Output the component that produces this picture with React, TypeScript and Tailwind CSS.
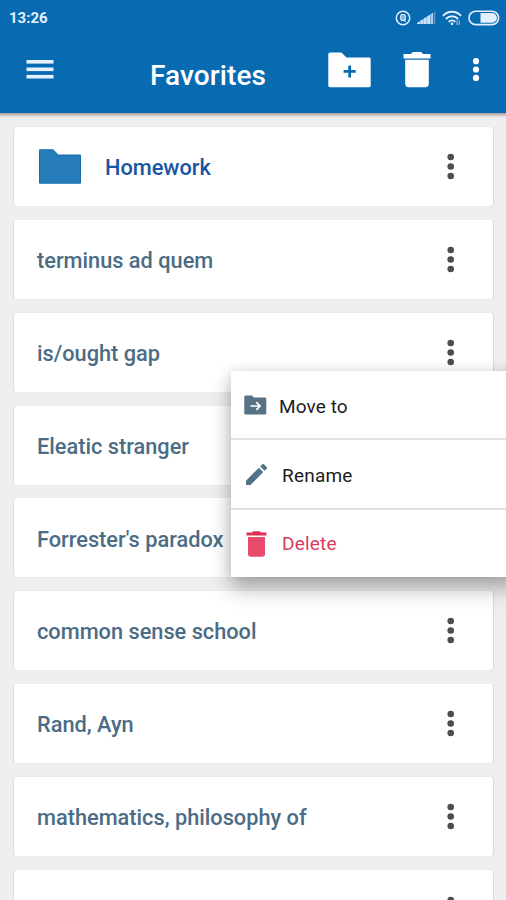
import { useState } from 'react'

interface Favorite {
  id: number
  title: string
  folder?: boolean
}

const favorites: Favorite[] = [
  { id: 1, title: 'Homework', folder: true },
  { id: 2, title: 'terminus ad quem' },
  { id: 3, title: 'is/ought gap' },
  { id: 4, title: 'Eleatic stranger' },
  { id: 5, title: "Forrester's paradox" },
  { id: 6, title: 'common sense school' },
  { id: 7, title: 'Rand, Ayn' },
  { id: 8, title: 'mathematics, philosophy of' },
  { id: 9, title: '' }
]

function MoreIcon({ className }: { className?: string }) {
  return (
    <svg width="8" height="27" viewBox="0 0 8 27" fill="currentColor" className={className}>
      <circle cx="3.7" cy="4" r="3.3" />
      <circle cx="3.7" cy="13.5" r="3.3" />
      <circle cx="3.7" cy="23" r="3.3" />
    </svg>
  )
}

function StatusBar() {
  return (
    <div className="flex h-[35px] items-center justify-between pr-[6px] pl-[9px] text-[#e3efff]">
      <span className="pt-px text-[15px] leading-none font-bold">13:26</span>
      <div className="flex items-center">
        <svg width="16" height="16" viewBox="0 0 16 16" fill="none" stroke="currentColor">
          <circle cx="8" cy="8" r="6.7" strokeWidth="1.5" />
          <rect x="5.7" y="4.5" width="4.6" height="6" rx="1.6" fill="currentColor" fillOpacity="0.55" strokeWidth="1.1" />
          <path d="M8.6 9.3L10.6 11.6" strokeWidth="1.2" />
        </svg>
        <svg width="19" height="14" viewBox="0 0 19 14" fill="currentColor" className="ml-[6px]">
          <path d="M0 13V12L3 10.3V13zM3.3 13V9.8L6.4 8V13zM6.7 13V7.6L9.8 5.8V13zM10.1 13V5.4L13.2 3.6V13z" opacity="0.9" />
          <path d="M13.5 13V3.2L16 1.8V13z" opacity="0.75" />
          <path d="M16.6 13V1.4L18.4 0.3V13z" opacity="0.35" />
        </svg>
        <svg width="20" height="16" viewBox="0 0 20 16" fill="none" stroke="currentColor" strokeWidth="2" className="ml-[6px]">
          <path d="M1 5.9C6 0.5 14 0.5 19 5.9" />
          <path d="M3.9 9C7.4 5.4 12.6 5.4 16.1 9" />
          <path d="M6.7 11.9C8.6 10 11.4 10 13.3 11.9" />
          <circle cx="10" cy="13.8" r="1.4" fill="currentColor" stroke="none" />
          <path d="M15 15V10.6M17.2 10.4V15" strokeWidth="1.1" opacity="0.7" />
        </svg>
        <svg width="32" height="16" viewBox="0 0 32 16" className="ml-[6px]">
          <rect x="1" y="1.2" width="29.6" height="13.4" rx="6.7" fill="none" stroke="currentColor" strokeWidth="1.6" />
          <path d="M12.5 3H24a4.9 4.9 0 0 1 0 9.8H12.5z" fill="currentColor" />
        </svg>
      </div>
    </div>
  )
}

function Header() {
  return (
    <header className="relative h-[113px] shrink-0 bg-[#086ab1] text-white shadow-[0_1px_3px_1px_rgba(90,60,60,0.5)]">
      <StatusBar />
      <div className="flex h-[69px] items-center pr-[26px] pl-[26px]">
        <svg width="28" height="20" viewBox="0 0 28 20" fill="#e9f1ff">
          <rect x="0.5" y="0" width="27" height="3.6" />
          <rect x="0.5" y="7.5" width="27" height="3.6" />
          <rect x="0.5" y="14.9" width="27" height="3.6" />
        </svg>
        <h1 className="mt-[12px] ml-[96px] w-[178px] text-[28px] leading-none font-medium tracking-[0.1px]">Favorites</h1>
        <svg width="43" height="36" viewBox="0 0 43 36" fill="currentColor">
          <path
            fillRule="evenodd"
            d="M2 .5H13.5L18.5 5.5H41Q42.7 5.5 42.7 7.2V33.5Q42.7 35.2 41 35.2H2Q.3 35.2 .3 33.5V2.2Q.3 .5 2 .5zM20.3 13.4V18H15.6V20.8H20.3V25.6H23V20.8H27.7V18H23V13.4z"
          />
        </svg>
        <svg width="28" height="36" viewBox="0 0 28 36" fill="currentColor" className="ml-[32px]">
          <path d="M.5 2H8L9.8 0H18.2L20 2H27.5V6.4H.5z" />
          <path d="M2.2 7.8H25.8V31.8Q25.8 35.2 22.4 35.2H5.6Q2.2 35.2 2.2 31.8z" />
        </svg>
        <svg width="8" height="26" viewBox="0 0 8 26" fill="currentColor" className="ml-[41px]">
          <circle cx="4" cy="4.2" r="3.1" />
          <circle cx="4" cy="12.5" r="3.1" />
          <circle cx="4" cy="20.9" r="3.1" />
        </svg>
      </div>
    </header>
  )
}

function FavoriteCard({ item, onMore }: { item: Favorite; onMore: () => void }) {
  return (
    <li className="flex h-[79px] shrink-0 items-center rounded-[3px] bg-white pr-[38px] pl-[23px] shadow-[1px_0_1px_rgba(0,0,0,0.1),-1px_0_1px_rgba(0,0,0,0.07)]">
      {item.folder && (
        <svg width="43" height="35" viewBox="0 0 43 35" className="mr-[23px] ml-[2px]">
          <path d="M.5 .8H14.2L19.2 6H41.5V34.2H.5z" fill="#277db9" stroke="#156fae" strokeWidth="1" />
        </svg>
      )}
      <span
        className={
          item.folder
            ? 'pt-[4px] text-[21.75px] font-medium text-[#1855a3]'
            : 'pt-[4px] text-[21.75px] font-medium text-[#4b6c84]'
        }
      >
        {item.title}
      </span>
      <button onClick={onMore} className="ml-auto text-[#4d4d4d]">
        <MoreIcon />
      </button>
    </li>
  )
}

function ContextMenu() {
  return (
    <div className="absolute top-[371px] left-[231px] h-[206px] w-[290px] bg-white text-[19px] text-[#1c1c1c] shadow-[0_12px_20px_rgba(0,0,0,0.28),0_0_12px_rgba(0,0,0,0.12)]">
      <div className="flex h-[69px] items-center border-b-2 border-[#e3e3e3] pl-[13px]">
        <svg width="23" height="20" viewBox="0 0 23 20">
          <path d="M1.5 .5H8L10 2.5H21Q22.3 2.5 22.3 3.8V18.5Q22.3 19.5 21 19.5H1.5Q.3 19.5 .3 18.5V1.7Q.3 .5 1.5 .5z" fill="#567283" />
          <path d="M6.5 11H16M12.3 7.2L16.1 11L12.3 14.8" fill="none" stroke="#fff" strokeWidth="1.7" />
        </svg>
        <span className="ml-[12px] pt-[5px] tracking-[0.1px]">Move to</span>
      </div>
      <div className="flex h-[70px] items-center border-b-2 border-[#e0e0e0] pl-[15px]">
        <svg width="21" height="21" viewBox="3 3 18 18" fill="#527386">
          <path d="M3 17.25V21h3.75L17.81 9.94l-3.75-3.75L3 17.25zM20.71 7.04a1 1 0 0 0 0-1.41l-2.34-2.34a1 1 0 0 0-1.41 0l-1.83 1.83 3.75 3.75 1.83-1.83z" />
        </svg>
        <span className="ml-[15px] pt-[4px] tracking-[0.2px]">Rename</span>
      </div>
      <div className="flex h-[67px] items-center pl-[15px] text-[#dc3b60]">
        <svg width="21" height="26" viewBox="0 0 21 26">
          <path d="M.5 1.5H6L7.3 .3H13.7L15 1.5H20.5V4.4H.5z" fill="#dc2f56" />
          <path d="M2 6H19V23.3Q19 25.7 16.6 25.7H4.4Q2 25.7 2 23.3z" fill="#e74c6d" />
        </svg>
        <span className="ml-[15px] pt-[2px] tracking-[0.2px]">Delete</span>
      </div>
    </div>
  )
}

export default function App() {
  const [menuFor, setMenuFor] = useState<number | null>(3)

  return (
    <div className="relative flex h-[900px] w-[506px] flex-col overflow-hidden bg-[#efefef] font-[Roboto,sans-serif]">
      <Header />
      <ul className="flex flex-col gap-[13.87px] pt-[14px] pr-[13px] pl-[14px]">
        {favorites.map((item) => (
          <FavoriteCard key={item.id} item={item} onMore={() => setMenuFor(menuFor === item.id ? null : item.id)} />
        ))}
      </ul>
      {menuFor !== null && <ContextMenu />}
    </div>
  )
}
